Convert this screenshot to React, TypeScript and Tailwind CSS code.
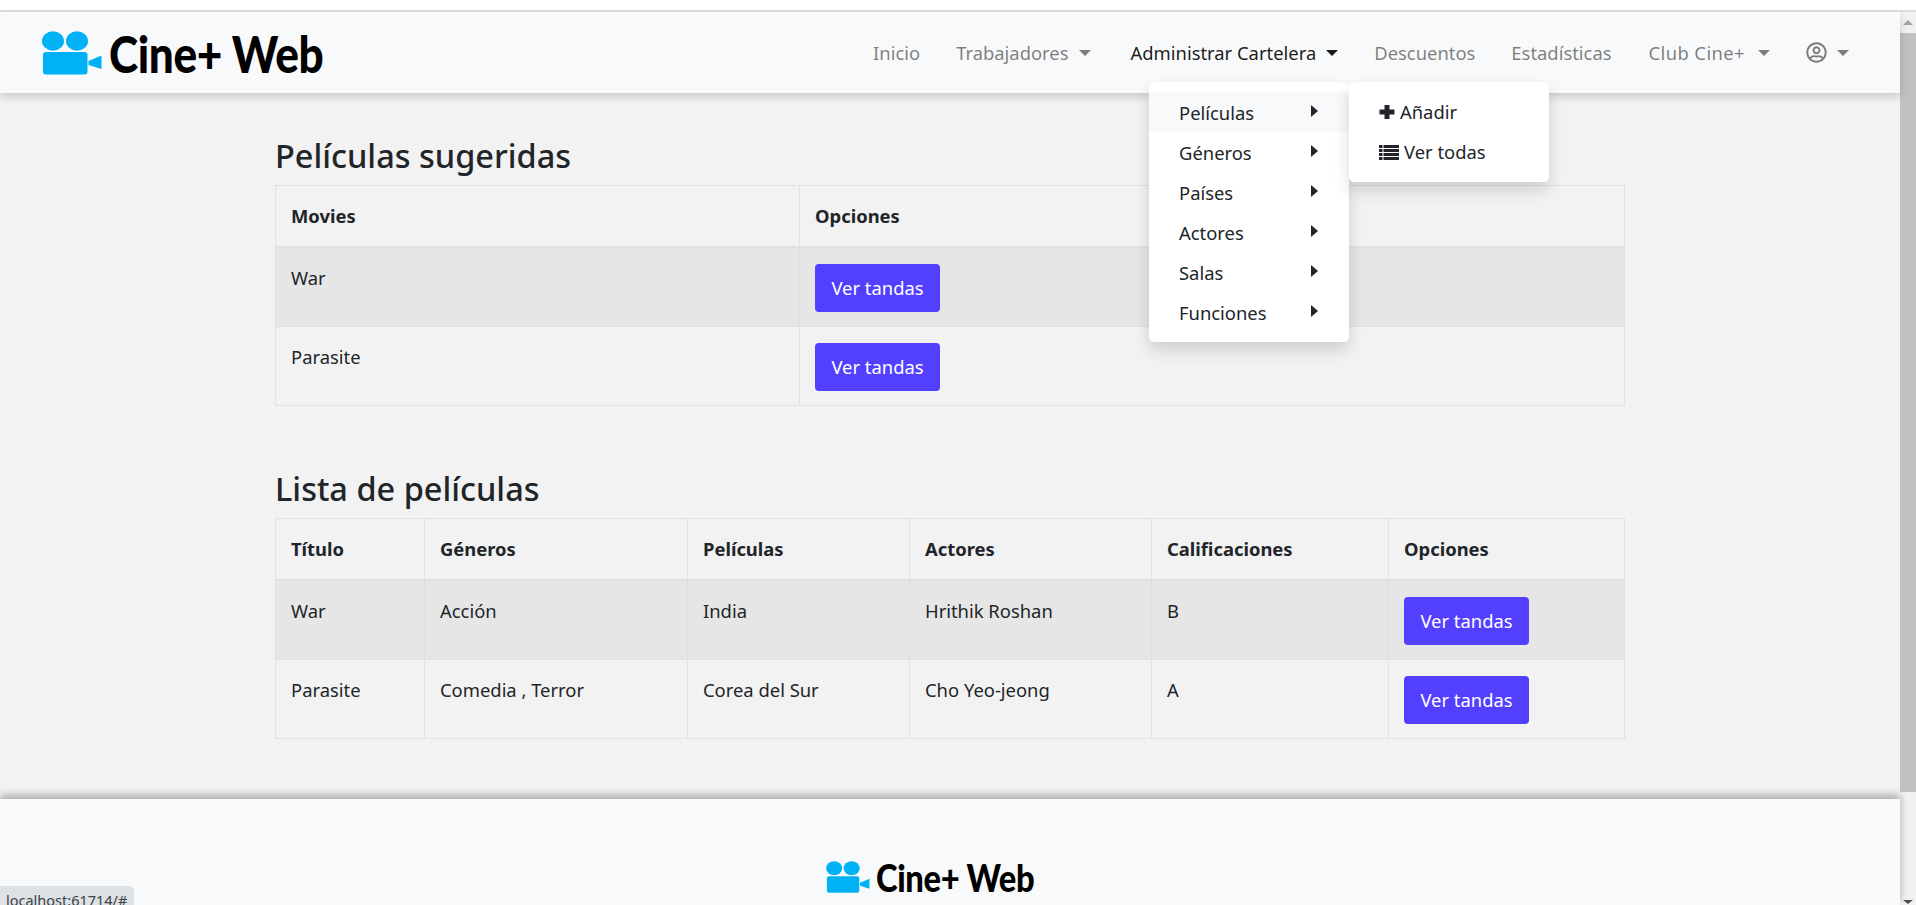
import React from "react";
import { FaRegUserCircle } from "react-icons/fa";

const Caret = () => (
  <span className="ml-[10px] inline-block h-0 w-0 border-x-[6.5px] border-t-[6.5px] border-x-transparent border-t-current" />
);

const Camera = ({ className }: { className: string }) => (
  <svg viewBox="0 0 60 44" className={className} fill="#00b2f5">
    <ellipse cx="11" cy="10" rx="11" ry="9.7" />
    <ellipse cx="35" cy="10" rx="11" ry="9.7" />
    <rect x="1" y="21" width="44.5" height="22.5" rx="3" />
    <polygon points="46.5,30 59.5,24.5 59.5,38 46.5,34" />
  </svg>
);

const Th = ({ children }: { children: React.ReactNode }) => (
  <th className="border border-b-2 border-[#dee2e6] px-[15px] py-[16px] text-left align-top font-bold">{children}</th>
);
const Td = ({ children }: { children: React.ReactNode }) => (
  <td className="border border-[#dee2e6] px-[15px] pb-[14.500px] pt-[15.500px] align-top">{children}</td>
);
const Btn = () => (
  <button className="block h-[48px] w-[125px] rounded-[4px] bg-[#5340ff] text-center text-white">Ver tandas</button>
);

const NavItem = ({ children, dark, caret, className = "" }: { children: React.ReactNode; dark?: boolean; caret?: boolean; className?: string }) => (
  <a className={`flex items-center ${dark ? "text-black/90" : "text-black/50"} ${className}`}>
    {children}
    {caret && <Caret />}
  </a>
);

const menu = ["Películas", "Géneros", "Países", "Actores", "Salas", "Funciones"];

export default function App() {
  return (
    <div className="relative h-[905px] w-[1916px] overflow-hidden bg-white font-['Noto_Sans','Open_Sans',sans-serif] text-[18.4px] leading-[28px] text-[#212529]">
      <div className="h-[12px] border-b-2 border-[#dcdde0]" />
      <div className="flex h-[893px]">
        <div className="flex h-full w-[1900px] flex-col bg-[#f2f2f2]">
          <nav className="relative z-10 flex h-[81px] shrink-0 items-center justify-between bg-[#f8f9fa] pl-[42px] pr-[51px] shadow-[0_4px_8px_rgba(0,0,0,0.16)]">
            <div className="flex items-center">
              <Camera className="h-[44px] w-[60px]" />
              <span className="ml-[7px] origin-left scale-x-[0.85] whitespace-nowrap font-['Lato'] text-[52px] font-black leading-none tracking-[-0.5px] text-black">Cine+ Web</span>
            </div>
            <div className="flex items-center gap-[36px]">
              <NavItem>Inicio</NavItem>
              <NavItem caret>Trabajadores</NavItem>
              <NavItem dark caret className="ml-[4px]">Administrar Cartelera</NavItem>
              <NavItem>Descuentos</NavItem>
              <NavItem>Estadísticas</NavItem>
              <NavItem className="ml-[1px]">
                <span className="tracking-[0.4px]">Club Cine+</span>
                <span className="ml-[3px] flex"><Caret /></span>
              </NavItem>
              <NavItem caret><FaRegUserCircle className="h-[21px] w-[21px]" /></NavItem>
            </div>
          </nav>

          <main className="mx-auto w-[1350px] flex-1 pt-[40px]">
            <h2 className="mb-[6px] text-[32.5px] font-medium leading-[46px]">Películas sugeridas</h2>
            <table className="w-full table-fixed border-collapse">
              <colgroup>
                <col className="w-[524px]" />
                <col />
              </colgroup>
              <thead>
                <tr><Th>Movies</Th><Th>Opciones</Th></tr>
              </thead>
              <tbody>
                <tr className="bg-[#e6e6e6]"><Td>War</Td><Td><Btn /></Td></tr>
                <tr><Td>Parasite</Td><Td><Btn /></Td></tr>
              </tbody>
            </table>

            <h2 className="mb-[6px] mt-[60px] text-[32.5px] font-medium leading-[46px]">Lista de películas</h2>
            <table className="w-full table-fixed border-collapse">
              <colgroup>
                <col className="w-[149px]" />
                <col className="w-[263px]" />
                <col className="w-[222px]" />
                <col className="w-[242px]" />
                <col className="w-[237px]" />
                <col />
              </colgroup>
              <thead>
                <tr>
                  <Th>Título</Th><Th>Géneros</Th><Th>Películas</Th><Th>Actores</Th><Th>Calificaciones</Th><Th>Opciones</Th>
                </tr>
              </thead>
              <tbody>
                <tr className="bg-[#e6e6e6]">
                  <Td>War</Td><Td>Acción</Td><Td>India</Td><Td>Hrithik Roshan</Td><Td>B</Td><Td><Btn /></Td>
                </tr>
                <tr>
                  <Td>Parasite</Td><Td>Comedia , Terror</Td><Td>Corea del Sur</Td><Td>Cho Yeo-jeong</Td><Td>A</Td><Td><Btn /></Td>
                </tr>
              </tbody>
            </table>
          </main>

          <footer className="relative flex h-[106px] shrink-0 justify-center bg-[#f8f9fa] pt-[61px] shadow-[0_-4px_8px_rgba(0,0,0,0.3)]">
            <div className="flex h-[33px] w-[249px] items-center">
              <Camera className="h-[32px] w-[44px] shrink-0" />
              <span className="ml-[6px] origin-left scale-x-[0.86] whitespace-nowrap font-['Lato'] text-[38px] font-black leading-none tracking-[-0.4px] text-black">Cine+ Web</span>
            </div>
          </footer>
        </div>

        <div className="flex h-full w-[16px] flex-col bg-[#f1f1f1]">
          <div className="flex h-[21px] shrink-0 items-center justify-center">
            <span className="h-0 w-0 border-x-[5px] border-b-[5px] border-x-transparent border-b-[#a3a3a3]" />
          </div>
          <div className="h-[759px] bg-[#c1c1c1]" />
          <div className="flex flex-1 items-end justify-center pb-[1px]">
            <span className="h-0 w-0 border-x-[5px] border-t-[4px] border-x-transparent border-t-[#505050]" />
          </div>
        </div>
      </div>

      {/* open dropdown */}
      <div className="absolute left-[1149px] top-[82px] z-20 h-[260px] w-[200px] rounded-[5px] bg-white py-[10px] shadow-[0_8px_16px_rgba(0,0,0,0.15)]">
        {menu.map((m, i) => (
          <div key={m} className={`flex h-[40px] items-center justify-between pl-[30px] pr-[31px] pt-[2px] ${i === 0 ? "bg-[#f8f9fa]" : ""}`}>
            <span>{m}</span>
            <span className="h-0 w-0 -translate-y-[2px] border-y-[6px] border-l-[7px] border-y-transparent border-l-[#212529]" />
          </div>
        ))}
      </div>
      <div className="absolute left-[1349px] top-[82px] z-30 h-[100px] w-[200px] rounded-[5px] bg-white py-[10px] shadow-[0_8px_16px_rgba(0,0,0,0.15)]">
        <div className="flex h-[40px] items-center pl-[30px]">
          <svg viewBox="0 0 16 16" className="mr-[5px] h-[16px] w-[16px]" fill="#212529">
            <path d="M5.5 1h5v4.5H15.500v5h-5V15h-5v-4.500H0.500v-5h5z" />
          </svg>
          <span>Añadir</span>
        </div>
        <div className="flex h-[40px] items-center pl-[30px]">
          <svg viewBox="0 0 20 16" className="mr-[5px] h-[16px] w-[20px]" fill="#212529">
            <path d="M0 1h3.500v3H0zM4.500 1H20v3H4.500zM0 5h3.500v3H0zM4.500 5H20v3H4.500zM0 9h3.500v3H0zM4.500 9H20v3H4.500zM0 13h3.500v3H0zM4.500 13H20v3H4.500z" />
          </svg>
          <span>Ver todas</span>
        </div>
      </div>

      {/* browser status bubble */}
      <div className="absolute bottom-0 left-0 z-40 h-[19px] w-[134px] overflow-hidden rounded-tr-[5px] bg-[#dee1e6] pl-[6px] pt-[4px] text-[14.5px] leading-[20px] text-[#3c4043]">localhost:61714/#</div>
    </div>
  );
}
